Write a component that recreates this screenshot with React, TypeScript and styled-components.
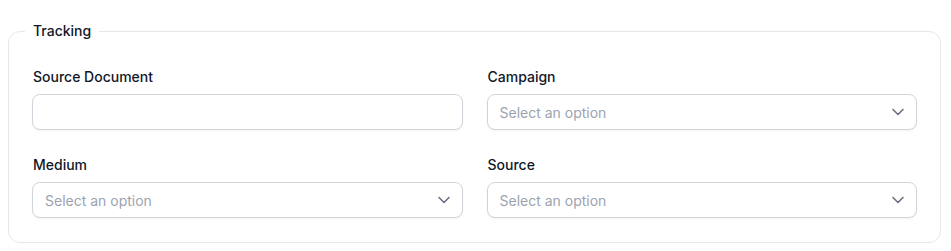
import React from "react";
import styled, { createGlobalStyle } from "styled-components";

const Global = createGlobalStyle`
  html, body { margin: 0; padding: 0; background: #ffffff; }
  body { font-family: Inter, "Noto Sans", sans-serif; color: #111827; }
  * { box-sizing: border-box; }
`;

const Page = styled.div`
  padding: 21px 10px 8px 8px;
`;

const Fieldset = styled.fieldset`
  margin: 0;
  border: 1px solid #e5e7eb;
  border-radius: 12px;
  padding: 26px 23px 24px 23px;
  min-width: 0;
`;

const Legend = styled.legend`
  font-size: 14px;
  line-height: 20px;
  font-weight: 500;
  color: #111827;
  padding: 0 8px;
  margin-left: -7px;
`;

const Grid = styled.div`
  display: grid;
  grid-template-columns: 1fr 1fr;
  column-gap: 24px;
  row-gap: 25px;
`;

const Field = styled.div`
  display: flex;
  flex-direction: column;
  gap: 7px;
`;

const Label = styled.label`
  font-size: 14px;
  line-height: 20px;
  font-weight: 500;
  color: #111827;
  padding-left: 1px;
`;

const Control = styled.div`
  height: 36px;
  border: 1px solid #d1d5db;
  border-radius: 8px;
  background: #ffffff;
  box-shadow: 0 1px 2px rgba(0, 0, 0, 0.05);
  display: flex;
  align-items: center;
  padding: 0 8px 0 12px;
`;

const Placeholder = styled.span`
  flex: 1;
  font-size: 14px;
  line-height: 20px;
  padding-top: 2px;
  color: #9ca3af;
`;

const Chevron = () => (
  <svg width="20" height="20" viewBox="0 0 20 20" fill="none">
    <path d="M5 7.5l5 5 5-5" stroke="#6b7280" strokeWidth="1.6" strokeLinecap="round" strokeLinejoin="round" />
  </svg>
);

const SelectField = ({ label }: { label: string }) => (
  <Field>
    <Label>{label}</Label>
    <Control>
      <Placeholder>Select an option</Placeholder>
      <Chevron />
    </Control>
  </Field>
);

export default function App() {
  return (
    <>
      <Global />
      <Page>
        <Fieldset>
          <Legend>Tracking</Legend>
          <Grid>
            <Field>
              <Label>Source Document</Label>
              <Control />
            </Field>
            <SelectField label="Campaign" />
            <SelectField label="Medium" />
            <SelectField label="Source" />
          </Grid>
        </Fieldset>
      </Page>
    </>
  );
}
